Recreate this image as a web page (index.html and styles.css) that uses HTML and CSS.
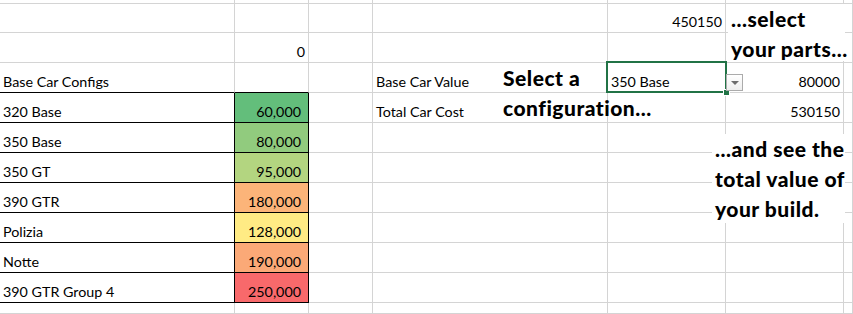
FILE: index.html
```html
<!DOCTYPE html>
<html lang="en">
<head>
<meta charset="utf-8">
<title>Car Build Calculator</title>
<link rel="stylesheet" href="styles.css">
</head>
<body>
<div class="sheet">
  <div class="grid">
    <!-- row 0 (partly scrolled off) -->
    <div class="c"></div><div class="c"></div><div class="c"></div><div class="c"></div><div class="c"></div><div class="c"></div><div class="c"></div>
    <!-- row 1 -->
    <div class="c"></div><div class="c"></div><div class="c"></div><div class="c"></div><div class="c num">450150</div><div class="c"></div><div class="c"></div>
    <!-- row 2 -->
    <div class="c"></div><div class="c num">0</div><div class="c"></div><div class="c"></div><div class="c"></div><div class="c"></div><div class="c"></div>
    <!-- row 3 -->
    <div class="c head">Base Car Configs</div><div class="c head"></div><div class="c"></div><div class="c">Base Car Value</div><div class="c">350 Base</div><div class="c num">80000</div><div class="c"></div>
    <!-- row 4 -->
    <div class="c name">320 Base</div><div class="c price p60">60,000</div><div class="c"></div><div class="c">Total Car Cost</div><div class="c"></div><div class="c num">530150</div><div class="c"></div>
    <!-- row 5 -->
    <div class="c name">350 Base</div><div class="c price p80">80,000</div><div class="c"></div><div class="c"></div><div class="c"></div><div class="c"></div><div class="c"></div>
    <!-- row 6 -->
    <div class="c name">350 GT</div><div class="c price p95">95,000</div><div class="c"></div><div class="c"></div><div class="c"></div><div class="c"></div><div class="c"></div>
    <!-- row 7 -->
    <div class="c name">390 GTR</div><div class="c price p180">180,000</div><div class="c"></div><div class="c"></div><div class="c"></div><div class="c"></div><div class="c"></div>
    <!-- row 8 -->
    <div class="c name">Polizia</div><div class="c price p128">128,000</div><div class="c"></div><div class="c"></div><div class="c"></div><div class="c"></div><div class="c"></div>
    <!-- row 9 -->
    <div class="c name">Notte</div><div class="c price p190">190,000</div><div class="c"></div><div class="c"></div><div class="c"></div><div class="c"></div><div class="c"></div>
    <!-- row 10 -->
    <div class="c name">390 GTR Group 4</div><div class="c price p250">250,000</div><div class="c"></div><div class="c"></div><div class="c"></div><div class="c"></div><div class="c"></div>
    <!-- row 11 -->
    <div class="c"></div><div class="c"></div><div class="c"></div><div class="c"></div><div class="c"></div><div class="c"></div><div class="c"></div>
  </div>

  <!-- floating text boxes -->
  <div class="note note-parts">...select<br>your parts...</div>
  <div class="note note-config">Select a<br>configuration...</div>
  <div class="note note-total">...and see the<br>total value of<br>your build.</div>

  <!-- active cell outline with fill handle -->
  <div class="selection"><span class="handle"></span></div>
  <!-- data validation dropdown button -->
  <div class="dropdown"><span class="arrow"></span></div>
</div>
</body>
</html>
```

FILE: styles.css
```css
html, body {
  margin: 0;
  padding: 0;
  background: #ffffff;
  overflow: hidden;
}

.sheet {
  position: relative;
  width: 853px;
  height: 314px;
  overflow: hidden;
  font-family: "Lato", "Liberation Sans", sans-serif;
  color: #000000;
}

.grid {
  display: grid;
  grid-template-columns: 235px 74px 64px 235px 118px 118px 1fr;
  grid-template-rows: 3px repeat(10, 30px) 1fr;
  height: 314px;
}

.c {
  box-sizing: border-box;
  display: flex;
  align-items: flex-end;
  padding: 0 3px 3px 3px;
  border-right: 1px solid #d4d4d4;
  border-bottom: 1px solid #d4d4d4;
  font-size: 14.3px;
  line-height: 1;
  white-space: nowrap;
  min-width: 0;
}

.num {
  justify-content: flex-end;
}

/* config table */
.head {
  border-bottom-color: #000000;
}

.name {
  border-bottom-color: #000000;
  border-right-color: #000000;
}

.price {
  justify-content: flex-end;
  padding-right: 7px;
  border-bottom-color: #000000;
  border-right-color: #000000;
}

/* three-colour scale: green (low) → yellow (median) → red (high) */
.p60  { background: #63be7b; }
.p80  { background: #91cb7e; }
.p95  { background: #b3d580; }
.p128 { background: #ffeb84; }
.p180 { background: #fcb479; }
.p190 { background: #fba977; }
.p250 { background: #f8696b; }

.selection {
  position: absolute;
  left: 606px;
  top: 61px;
  width: 121px;
  height: 32px;
  box-sizing: border-box;
  border: 2px solid #217346;
}

.handle {
  position: absolute;
  right: -4px;
  bottom: -4px;
  width: 5px;
  height: 5px;
  background: #217346;
  box-shadow: 0 0 0 1px #ffffff;
}

.dropdown {
  position: absolute;
  left: 726px;
  top: 74px;
  width: 17px;
  height: 17px;
  box-sizing: border-box;
  border: 1px solid #ababab;
  background: linear-gradient(#ffffff, #eeeeee);
  display: flex;
  align-items: center;
  justify-content: center;
}

.arrow {
  width: 0;
  height: 0;
  border-left: 4px solid transparent;
  border-right: 4px solid transparent;
  border-top: 4px solid #6d6d6d;
}

.note {
  position: absolute;
  font-family: "Lato", "Liberation Sans", sans-serif;
  font-weight: 900;
  font-size: 21px;
  letter-spacing: 0.5px;
  line-height: 30px;
  white-space: nowrap;
}

.note-parts {
  left: 728px;
  top: 4px;
  width: 114px;
  height: 57px;
  padding-left: 3px;
  background: #ffffff;
}

.note-config {
  left: 500px;
  top: 63px;
  padding-left: 3px;
}

.note-total {
  left: 712px;
  top: 134px;
  width: 130px;
  height: 89px;
  padding-left: 3px;
  background: #ffffff;
}
```
